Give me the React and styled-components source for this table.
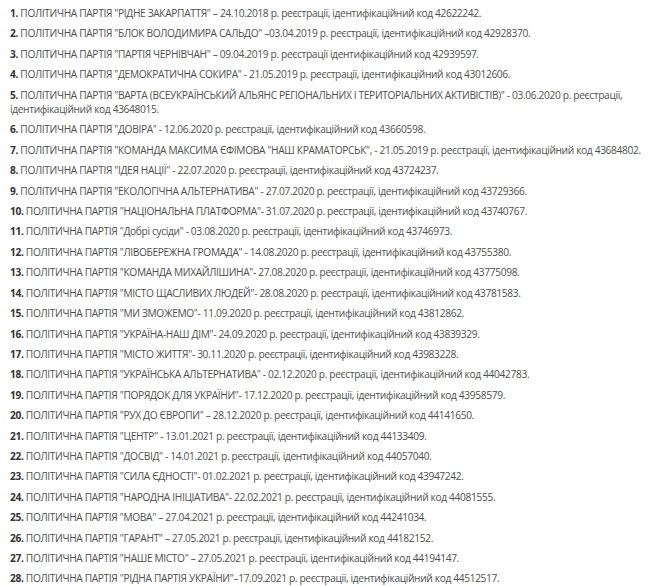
import React from "react";
import styled, { createGlobalStyle } from "styled-components";

const GlobalStyle = createGlobalStyle`
  html, body {
    margin: 0;
    padding: 0;
    background: #fff;
  }
`;

const List = styled.div`
  box-sizing: border-box;
  width: 652px;
  padding: 6px 10px 0 10px;
  font-family: "Open Sans", "Liberation Sans", sans-serif;
  font-size: 10.2px;
  letter-spacing: -0.35px;
  color: #505050;
`;

const Item = styled.p`
  margin: 0 0 6px;
  line-height: 14.4px;
`;

const Num = styled.strong`
  font-weight: 700;
  color: #333;
`;

const items = [
  'ПОЛІТИЧНА ПАРТІЯ "РІДНЕ ЗАКАРПАТТЯ" – 24.10.2018 р. реєстрації, ідентифікаційний код 42622242.',
  'ПОЛІТИЧНА ПАРТІЯ "БЛОК ВОЛОДИМИРА САЛЬДО" –03.04.2019 р. реєстрації, ідентифікаційний код 42928370.',
  'ПОЛІТИЧНА ПАРТІЯ "ПАРТІЯ ЧЕРНІВЧАН" – 09.04.2019 р. реєстрації ідентифікаційний код 42939597.',
  'ПОЛІТИЧНА ПАРТІЯ "ДЕМОКРАТИЧНА СОКИРА" - 21.05.2019 р. реєстрації, ідентифікаційний код 43012606.',
  'ПОЛІТИЧНА ПАРТІЯ "ВАРТА (ВСЕУКРАЇНСЬКИЙ АЛЬЯНС РЕГІОНАЛЬНИХ І ТЕРИТОРІАЛЬНИХ АКТИВІСТІВ)" - 03.06.2020 р. реєстрації, ідентифікаційний код 43648015.',
  'ПОЛІТИЧНА ПАРТІЯ "ДОВІРА" - 12.06.2020 р. реєстрації, ідентифікаційний код 43660598.',
  'ПОЛІТИЧНА ПАРТІЯ "КОМАНДА МАКСИМА ЄФІМОВА "НАШ КРАМАТОРСЬК", - 21.05.2019 р. реєстрації, ідентифікаційний код 43684802.',
  'ПОЛІТИЧНА ПАРТІЯ "ІДЕЯ НАЦІЇ" - 22.07.2020 р. реєстрації, ідентифікаційний код 43724237.',
  'ПОЛІТИЧНА ПАРТІЯ "ЕКОЛОГІЧНА АЛЬТЕРНАТИВА" - 27.07.2020 р. реєстрації, ідентифікаційний код 43729366.',
  'ПОЛІТИЧНА ПАРТІЯ "НАЦІОНАЛЬНА ПЛАТФОРМА"- 31.07.2020 р. реєстрації, ідентифікаційний код 43740767.',
  'ПОЛІТИЧНА ПАРТІЯ "Добрі сусіди" - 03.08.2020 р. реєстрації, ідентифікаційний код 43746973.',
  'ПОЛІТИЧНА ПАРТІЯ "ЛІВОБЕРЕЖНА ГРОМАДА" - 14.08.2020 р. реєстрації, ідентифікаційний код 43755380.',
  'ПОЛІТИЧНА ПАРТІЯ "КОМАНДА МИХАЙЛІШИНА"- 27.08.2020 р. реєстрації, ідентифікаційний код 43775098.',
  'ПОЛІТИЧНА ПАРТІЯ "МІСТО ЩАСЛИВИХ ЛЮДЕЙ"- 28.08.2020 р. реєстрації, ідентифікаційний код 43781583.',
  'ПОЛІТИЧНА ПАРТІЯ "МИ ЗМОЖЕМО"- 11.09.2020 р. реєстрації, ідентифікаційний код 43812862.',
  'ПОЛІТИЧНА ПАРТІЯ "УКРАЇНА-НАШ ДІМ"- 24.09.2020 р. реєстрації, ідентифікаційний код 43839329.',
  'ПОЛІТИЧНА ПАРТІЯ "МІСТО ЖИТТЯ"- 30.11.2020 р. реєстрації, ідентифікаційний код 43983228.',
  'ПОЛІТИЧНА ПАРТІЯ "УКРАЇНСЬКА АЛЬТЕРНАТИВА" - 02.12.2020 р. реєстрації, ідентифікаційний код 44042783.',
  'ПОЛІТИЧНА ПАРТІЯ "ПОРЯДОК ДЛЯ УКРАЇНИ"- 17.12.2020 р. реєстрації, ідентифікаційний код 43958579.',
  'ПОЛІТИЧНА ПАРТІЯ "РУХ ДО ЄВРОПИ" – 28.12.2020 р. реєстрації, ідентифікаційний код 44141650.',
  'ПОЛІТИЧНА ПАРТІЯ "ЦЕНТР" - 13.01.2021 р. реєстрації, ідентифікаційний код 44133409.',
  'ПОЛІТИЧНА ПАРТІЯ "ДОСВІД" - 14.01.2021 р. реєстрації, ідентифікаційний код 44057040.',
  'ПОЛІТИЧНА ПАРТІЯ "СИЛА ЄДНОСТІ"- 01.02.2021 р. реєстрації, ідентифікаційний код 43947242.',
  'ПОЛІТИЧНА ПАРТІЯ "НАРОДНА ІНІЦІАТИВА"- 22.02.2021 р. реєстрації, ідентифікаційний код 44081555.',
  'ПОЛІТИЧНА ПАРТІЯ "МОВА" – 27.04.2021 р. реєстрації, ідентифікаційний код 44241034.',
  'ПОЛІТИЧНА ПАРТІЯ "ГАРАНТ" – 27.05.2021 р. реєстрації, ідентифікаційний код 44182152.',
  'ПОЛІТИЧНА ПАРТІЯ "НАШЕ МІСТО" – 27.05.2021 р. реєстрації, ідентифікаційний код 44194147.',
  'ПОЛІТИЧНА ПАРТІЯ "РІДНА ПАРТІЯ УКРАЇНИ"–17.09.2021 р. реєстрації, ідентифікаційний код 44512517.',
];

export default function App() {
  return (
    <>
      <GlobalStyle />
      <List>
        {items.map((text, i) => (
          <Item key={i}>
            <Num>{i + 1}.</Num> {text}
          </Item>
        ))}
      </List>
    </>
  );
}
